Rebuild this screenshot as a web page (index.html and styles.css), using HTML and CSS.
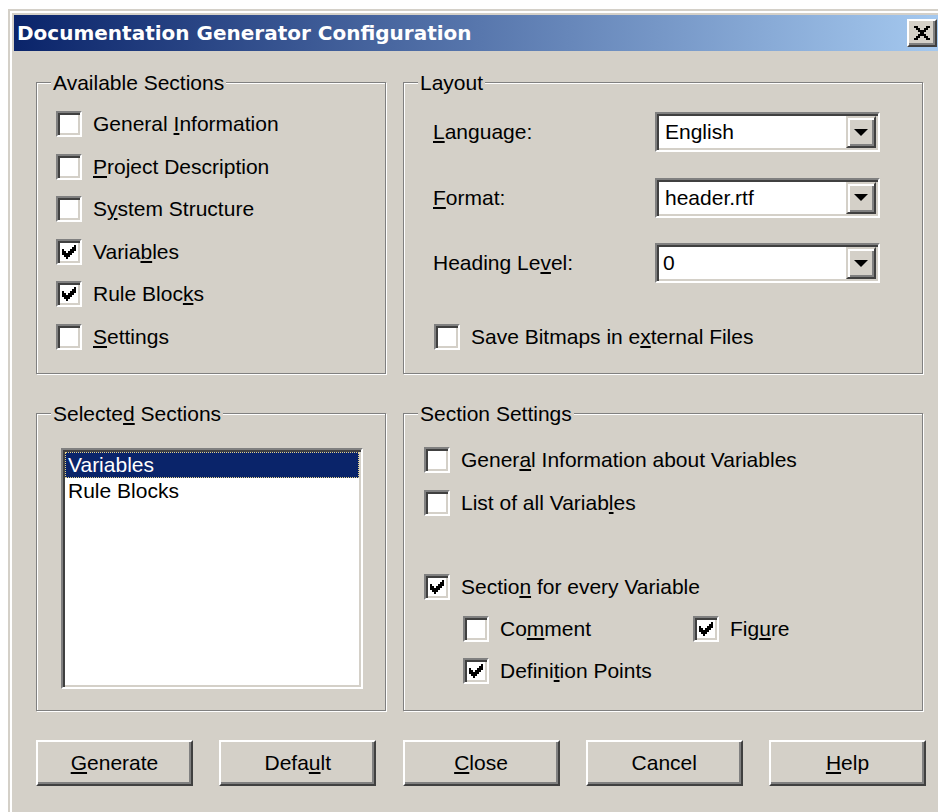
FILE: index.html
```html
<!DOCTYPE html>
<html lang="en">
<head>
<meta charset="utf-8">
<title>Documentation Generator Configuration</title>
<link rel="stylesheet" href="styles.css">
</head>
<body>
<div class="window">
  <div class="titlebar">
    <span class="title">Documentation Generator Configuration</span>
    <button class="close" type="button" aria-label="Close">
      <svg viewBox="0 0 8 7" width="16" height="14" shape-rendering="crispEdges"><path fill="#000" d="M0 0h2v1h-2zM6 0h2v1h-2zM1 1h2v1h-2zM5 1h2v1h-2zM2 2h4v1h-4zM3 3h2v1h-2zM2 4h4v1h-4zM1 5h2v1h-2zM5 5h2v1h-2zM0 6h2v1h-2zM6 6h2v1h-2z"/></svg>
    </button>
  </div>

  <div class="client">
    <div class="panels">
      <section class="group">
        <span class="legend">Available Sections</span>
        <div class="checks">
          <div class="check"><span class="box"></span><span>General <u>I</u>nformation</span></div>
          <div class="check"><span class="box"></span><span><u>P</u>roject Description</span></div>
          <div class="check"><span class="box"></span><span>S<u>y</u>stem Structure</span></div>
          <div class="check"><span class="box"><svg viewBox="0 0 7 7" width="14" height="14" shape-rendering="crispEdges"><path d="M6 0h1v1h-1zM5 1h2v1h-2zM0 2h1v1h-1zM4 2h3v1h-3zM0 3h2v1h-2zM3 3h3v1h-3zM0 4h5v1h-5zM1 5h3v1h-3zM2 6h1v1h-1z"/></svg></span><span>Varia<u>b</u>les</span></div>
          <div class="check"><span class="box"><svg viewBox="0 0 7 7" width="14" height="14" shape-rendering="crispEdges"><path d="M6 0h1v1h-1zM5 1h2v1h-2zM0 2h1v1h-1zM4 2h3v1h-3zM0 3h2v1h-2zM3 3h3v1h-3zM0 4h5v1h-5zM1 5h3v1h-3zM2 6h1v1h-1z"/></svg></span><span>Rule Bloc<u>k</u>s</span></div>
          <div class="check"><span class="box"></span><span><u>S</u>ettings</span></div>
        </div>
      </section>

      <section class="group">
        <span class="legend">Layout</span>
        <div class="fields">
          <div class="field">
            <span class="field-label"><u>L</u>anguage:</span>
            <div class="combo"><span class="combo-value">English</span><span class="drop"></span></div>
          </div>
          <div class="field">
            <span class="field-label"><u>F</u>ormat:</span>
            <div class="combo"><span class="combo-value">header.rtf</span><span class="drop"></span></div>
          </div>
          <div class="field">
            <span class="field-label">Heading Le<u>v</u>el:</span>
            <div class="combo"><span class="combo-value edit">0</span><span class="drop"></span></div>
          </div>
          <div class="check save"><span class="box"></span><span>Save Bitmaps in e<u>x</u>ternal Files</span></div>
        </div>
      </section>

      <section class="group">
        <span class="legend">Selecte<u>d</u> Sections</span>
        <div class="listbox">
          <div class="item sel">Variables</div>
          <div class="item">Rule Blocks</div>
        </div>
      </section>

      <section class="group">
        <span class="legend">Section Settings</span>
        <div class="opts">
          <div class="check"><span class="box"></span><span>Gener<u>a</u>l Information about Variables</span></div>
          <div class="check"><span class="box"></span><span>List of all Variab<u>l</u>es</span></div>
          <div class="check every"><span class="box"><svg viewBox="0 0 7 7" width="14" height="14" shape-rendering="crispEdges"><path d="M6 0h1v1h-1zM5 1h2v1h-2zM0 2h1v1h-1zM4 2h3v1h-3zM0 3h2v1h-2zM3 3h3v1h-3zM0 4h5v1h-5zM1 5h3v1h-3zM2 6h1v1h-1z"/></svg></span><span>Sectio<u>n</u> for every Variable</span></div>
          <div class="sub">
            <div class="check"><span class="box"></span><span>Co<u>m</u>ment</span></div>
            <div class="check"><span class="box"><svg viewBox="0 0 7 7" width="14" height="14" shape-rendering="crispEdges"><path d="M6 0h1v1h-1zM5 1h2v1h-2zM0 2h1v1h-1zM4 2h3v1h-3zM0 3h2v1h-2zM3 3h3v1h-3zM0 4h5v1h-5zM1 5h3v1h-3zM2 6h1v1h-1z"/></svg></span><span>Fig<u>u</u>re</span></div>
            <div class="check"><span class="box"><svg viewBox="0 0 7 7" width="14" height="14" shape-rendering="crispEdges"><path d="M6 0h1v1h-1zM5 1h2v1h-2zM0 2h1v1h-1zM4 2h3v1h-3zM0 3h2v1h-2zM3 3h3v1h-3zM0 4h5v1h-5zM1 5h3v1h-3zM2 6h1v1h-1z"/></svg></span><span>Defini<u>t</u>ion Points</span></div>
          </div>
        </div>
      </section>
    </div>

    <div class="buttons">
      <button class="btn" type="button"><u>G</u>enerate</button>
      <button class="btn" type="button">Defa<u>u</u>lt</button>
      <button class="btn" type="button"><u>C</u>lose</button>
      <button class="btn" type="button">Cancel</button>
      <button class="btn" type="button"><u>H</u>elp</button>
    </div>
  </div>
</div>
</body>
</html>
```

FILE: styles.css
```css
* {
  box-sizing: border-box;
}

html,
body {
  margin: 0;
  padding: 0;
  background: #fff;
  overflow: hidden;
}

body {
  font-family: "Liberation Sans", Arial, sans-serif;
  font-size: 21px;
  color: #000;
}

u {
  text-decoration: underline;
  text-underline-offset: 2px;
  text-decoration-thickness: 2px;
}

/* Dialog frame */
.window {
  margin: 9px 0 0 8px;
  width: 940px;
  height: 820px;
  background: #d4d0c8;
  border: 2px solid #d4d0c8;
  box-shadow: inset 2px 2px 0 #fff;
  padding: 4px 0 0 4px;
}

.titlebar {
  display: flex;
  align-items: center;
  height: 36px;
  padding-left: 3px;
  background: linear-gradient(90deg, #0a246a, #a6caf0);
}

.title {
  color: #fff;
  font-family: "DejaVu Sans", Verdana, sans-serif;
  font-weight: bold;
  font-size: 20px;
  white-space: nowrap;
}

.close {
  margin-left: auto;
  margin-right: 9px;
  width: 30px;
  height: 28px;
  padding: 0;
  background: #d4d0c8;
  border: 2px solid;
  border-color: #fff #404040 #404040 #fff;
  box-shadow: inset -2px -2px 0 #808080;
  display: flex;
  align-items: center;
  justify-content: center;
}

.close svg {
  display: block;
}

/* Client area */
.client {
  padding: 31px 0 0 22px;
}

.panels {
  display: grid;
  grid-template-columns: 350px 520px;
  grid-template-rows: 292px 298px;
  column-gap: 17px;
  row-gap: 39px;
}

/* Etched group frame */
.group {
  display: flex;
  flex-direction: column;
  border: 1px solid #808080;
  box-shadow: inset 1px 1px 0 #fff, 1px 1px 0 #fff;
}

.legend {
  align-self: flex-start;
  margin: -12px 0 0 14px;
  padding: 0 2px;
  line-height: 24px;
  background: #d4d0c8;
  white-space: nowrap;
}

/* Check boxes */
.checks {
  display: flex;
  flex-direction: column;
  gap: 16.6px;
  margin-top: 16px;
  padding-left: 19px;
}

.check {
  display: flex;
  align-items: center;
  gap: 11px;
  height: 26px;
  line-height: 24px;
  white-space: nowrap;
}

.box {
  flex: none;
  width: 26px;
  height: 26px;
  background: #fff;
  border: 2px solid;
  border-color: #808080 #fff #fff #808080;
  box-shadow: inset 2px 2px 0 #404040, inset -2px -2px 0 #d4d0c8;
  display: flex;
  align-items: center;
  justify-content: center;
}

.box svg {
  display: block;
  fill: #000;
}

/* Layout fields */
.fields {
  display: flex;
  flex-direction: column;
  gap: 25.5px;
  margin-top: 17px;
  padding-left: 29px;
}

.field {
  display: flex;
  align-items: center;
  height: 40px;
}

.field-label {
  width: 222px;
  white-space: nowrap;
}

.combo {
  display: flex;
  width: 225px;
  height: 40px;
  padding: 2px;
  background: #fff;
  border: 2px solid;
  border-color: #808080 #fff #fff #808080;
  box-shadow: inset 2px 2px 0 #404040, inset -2px -2px 0 #d4d0c8;
}

.combo-value {
  flex: 1;
  display: flex;
  align-items: center;
  padding-left: 6px;
  white-space: nowrap;
}

.combo-value.edit {
  padding-left: 4px;
}

.drop {
  flex: none;
  width: 30px;
  background: #d4d0c8;
  border: 2px solid;
  border-color: #d4d0c8 #404040 #404040 #d4d0c8;
  box-shadow: inset 2px 2px 0 #fff, inset -2px -2px 0 #808080;
  display: flex;
  align-items: center;
  justify-content: center;
}

.drop::before {
  content: "";
  border-left: 7px solid transparent;
  border-right: 7px solid transparent;
  border-top: 7px solid #000;
}

.save {
  margin-top: 15.5px;
  padding-left: 1px;
}

/* List box */
.listbox {
  margin: 22px 0 0 24px;
  width: 302px;
  height: 241px;
  padding: 2px;
  background: #fff;
  border: 2px solid;
  border-color: #808080 #fff #fff #808080;
  box-shadow: inset 2px 2px 0 #404040, inset -2px -2px 0 #d4d0c8;
}

.item {
  height: 26px;
  line-height: 26px;
  padding-left: 3px;
  white-space: nowrap;
}

.item.sel {
  background: #0a246a;
  color: #fff;
  outline: 1px dotted #e6d48a;
  outline-offset: -1px;
}

/* Section settings */
.opts {
  display: flex;
  flex-direction: column;
  gap: 17px;
  margin-top: 21px;
  padding-left: 20px;
}

.opts .every {
  margin-top: 41px;
}

.sub {
  display: grid;
  grid-template-columns: 230px auto;
  row-gap: 16px;
  margin-left: 39px;
  margin-top: -1px;
}

/* Push buttons */
.buttons {
  display: flex;
  justify-content: space-between;
  width: 890px;
  margin-top: 29px;
}

.btn {
  width: 157px;
  height: 46px;
  padding: 0;
  font: inherit;
  color: #000;
  background: #d4d0c8;
  border: 2px solid;
  border-color: #fff #404040 #404040 #fff;
  box-shadow: inset -2px -2px 0 #808080;
}
```
